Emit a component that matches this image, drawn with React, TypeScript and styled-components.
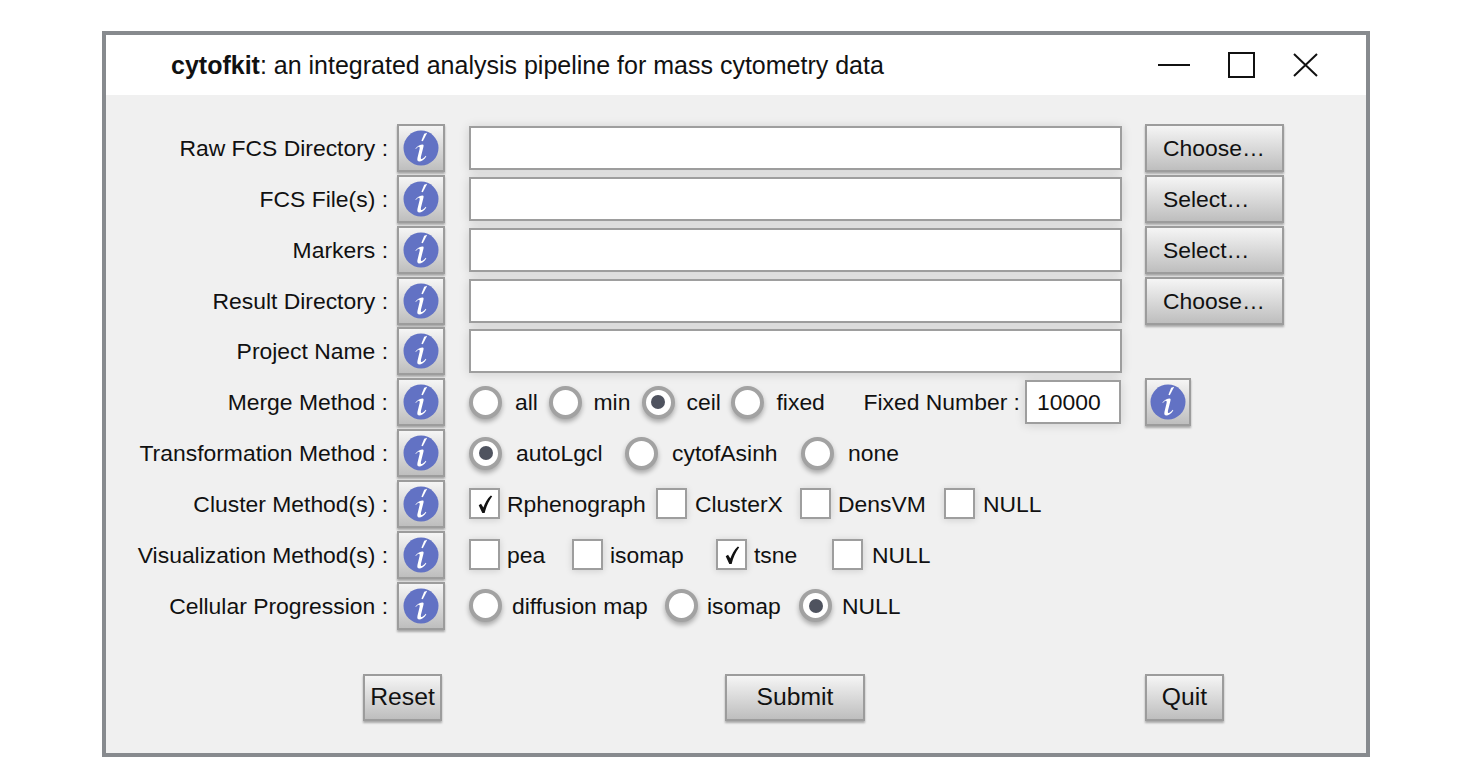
import React from "react";
import styled, { createGlobalStyle } from "styled-components";

const Global = createGlobalStyle`
  html, body {
    margin: 0;
    padding: 0;
    background: #fff;
  }
  body {
    font-family: "Liberation Sans", Arial, sans-serif;
    color: #111;
  }
`;

const Page = styled.div`
  width: 1472px;
  height: 766px;
  padding: 31px 102px 9px;
  box-sizing: border-box;
`;

const Window = styled.div`
  width: 1268px;
  height: 726px;
  box-sizing: border-box;
  border: 4px solid #878a8e;
  display: flex;
  flex-direction: column;
`;

const TitleBar = styled.div`
  height: 60px;
  flex: none;
  background: #fff;
  display: flex;
  align-items: center;
  padding-left: 65px;
`;

const Title = styled.div`
  font-size: 25px;
  padding-top: 1px;
  flex: 1;
  b {
    font-weight: 700;
  }
`;

const WinControls = styled.div`
  display: flex;
  align-items: center;
  gap: 38px;
  margin-right: 48px;
`;

const Body = styled.div`
  flex: 1;
  background: #f0f0f0;
  padding-top: 29px;
  display: flex;
  flex-direction: column;
`;

const Rows = styled.div`
  display: flex;
  flex-direction: column;
  gap: 2.85px;
`;

const Row = styled.div`
  display: flex;
  align-items: center;
  height: 48px;
`;

const Label = styled.div`
  width: 282px;
  flex: none;
  text-align: right;
  font-size: 22.9px;
  padding-top: 1px;
  white-space: nowrap;
`;

const raised = `
  box-sizing: border-box;
  border: 2.5px solid #9c9c9c;
  background: linear-gradient(#f5f5f5, #bebebe);
  box-shadow: 0 2px 2px rgba(0, 0, 0, 0.3);
`;

const InfoBox = styled.div<{ $left?: number; $width?: number }>`
  ${raised}
  width: ${(p) => p.$width ?? 48}px;
  height: 48px;
  flex: none;
  margin-left: ${(p) => p.$left ?? 9}px;
  display: flex;
  align-items: center;
  justify-content: center;
`;

const Controls = styled.div`
  margin-left: 24px;
  width: 653px;
  flex: none;
  display: flex;
  align-items: center;
  height: 100%;
`;

const TextField = styled.div<{ $width?: number; $left?: number }>`
  box-sizing: border-box;
  width: ${(p) => p.$width ?? 653}px;
  height: 44px;
  flex: none;
  margin-left: ${(p) => p.$left ?? 0}px;
  background: #fff;
  border: 2.5px solid #9e9e9e;
  box-shadow: 0 1px 10px rgba(0, 0, 0, 0.14);
  font-size: 22.9px;
  display: flex;
  align-items: center;
  padding: 1px 0 0 10px;
`;

const SideButton = styled.div`
  ${raised}
  margin-left: 23px;
  width: 139px;
  height: 48px;
  flex: none;
  font-size: 22.9px;
  display: flex;
  align-items: center;
  padding: 1px 0 0 16px;
`;

const Option = styled.div<{ $width?: number }>`
  display: flex;
  align-items: center;
  flex: none;
  width: ${(p) => (p.$width ? `${p.$width}px` : "auto")};
`;

const OptionText = styled.span<{ $gap: number }>`
  margin-left: ${(p) => p.$gap}px;
  padding-top: 1px;
  font-size: 22.9px;
  white-space: nowrap;
`;

const RadioMark = styled.span<{ $on?: boolean }>`
  width: 33px;
  height: 33px;
  flex: none;
  box-sizing: border-box;
  border-radius: 50%;
  border: 4px solid #a2a2a2;
  background: #fff;
  box-shadow: 0 3px 5px rgba(0, 0, 0, 0.3);
  display: flex;
  align-items: center;
  justify-content: center;
  &::after {
    content: "";
    display: ${(p) => (p.$on ? "block" : "none")};
    width: 14px;
    height: 14px;
    border-radius: 50%;
    background: #4f535f;
  }
`;

const CheckMark = styled.span`
  width: 31px;
  height: 31px;
  flex: none;
  box-sizing: border-box;
  border: 2.5px solid #9e9e9e;
  background: #fff;
  box-shadow: 0 1px 7px rgba(0, 0, 0, 0.14);
  display: flex;
  align-items: center;
  justify-content: center;
`;

const FixedLabel = styled.span`
  font-size: 22.9px;
  padding-top: 1px;
  white-space: nowrap;
`;

const Footer = styled.div`
  display: flex;
  align-items: center;
  margin-top: 44px;
  padding-left: 257px;
`;

const FootButton = styled.div<{ $width: number; $left?: number }>`
  ${raised}
  width: ${(p) => p.$width}px;
  height: 47px;
  margin-left: ${(p) => p.$left ?? 0}px;
  font-size: 24.7px;
  display: flex;
  align-items: center;
  justify-content: center;
`;

function InfoIcon() {
  return (
    <svg width="36" height="36" viewBox="0 0 36 36">
      <circle cx="18" cy="18" r="17.5" fill="#6272c4" />
      <path d="M21.2 3.8 L24.2 2.8 L19.8 11.2 L18.4 10.8 Z" fill="#fff" />
      <path
        d="M12.4 18.4 C14.6 15.8 17.4 14.4 19.6 14.4 C20.8 14.4 20.8 15.6 20.4 17 L18 26.4 C17.5 28.6 18.2 29.4 19.4 28.8 C20.6 28.2 21.6 27.2 22.8 25.8 L23.3 26.4 C21.2 29.6 18.4 31.4 16 31.4 C14.4 31.4 14 30 14.5 27.8 L16.6 19 C17 17.2 16.4 16.4 15.2 17 C14.4 17.4 13.6 18.1 12.9 18.9 Z"
        fill="#fff"
      />
    </svg>
  );
}

function Info({ left, width }: { left?: number; width?: number }) {
  return (
    <InfoBox $left={left} $width={width}>
      <InfoIcon />
    </InfoBox>
  );
}

function Radio({ text, gap, width, on }: { text: string; gap: number; width?: number; on?: boolean }) {
  return (
    <Option $width={width}>
      <RadioMark $on={on} />
      <OptionText $gap={gap}>{text}</OptionText>
    </Option>
  );
}

function Check({ text, gap, width, on }: { text: string; gap: number; width?: number; on?: boolean }) {
  return (
    <Option $width={width}>
      <CheckMark>
        {on && (
          <svg width="18" height="20" viewBox="0 0 20 22">
            <path d="M3 12.5 L5.6 10.6 L8.2 15 C10 10 12.5 5 16.5 1.5 L18 2.5 C14 8 11.4 14 9.6 21 L7 21 Z" fill="#111" />
          </svg>
        )}
      </CheckMark>
      <OptionText $gap={gap}>{text}</OptionText>
    </Option>
  );
}

export default function App() {
  return (
    <Page>
      <Global />
      <Window>
        <TitleBar>
          <Title>
            <b>cytofkit</b>: an integrated analysis pipeline for mass cytometry data
          </Title>
          <WinControls>
            <svg width="32" height="26" viewBox="0 0 32 26">
              <path d="M0 13 H32" stroke="#111" strokeWidth="2" />
            </svg>
            <svg width="27" height="26" viewBox="0 0 27 26">
              <rect x="1" y="1" width="25" height="24" fill="none" stroke="#111" strokeWidth="2" />
            </svg>
            <svg width="25" height="24" viewBox="0 0 25 24">
              <path d="M1 1 L24 23 M24 1 L1 23" stroke="#111" strokeWidth="2" />
            </svg>
          </WinControls>
        </TitleBar>
        <Body>
          <Rows>
            <Row>
              <Label>Raw FCS Directory :</Label>
              <Info />
              <Controls>
                <TextField />
              </Controls>
              <SideButton>Choose…</SideButton>
            </Row>
            <Row>
              <Label>FCS File(s) :</Label>
              <Info />
              <Controls>
                <TextField />
              </Controls>
              <SideButton>Select…</SideButton>
            </Row>
            <Row>
              <Label>Markers :</Label>
              <Info />
              <Controls>
                <TextField />
              </Controls>
              <SideButton>Select…</SideButton>
            </Row>
            <Row>
              <Label>Result Directory :</Label>
              <Info />
              <Controls>
                <TextField />
              </Controls>
              <SideButton>Choose…</SideButton>
            </Row>
            <Row>
              <Label>Project Name :</Label>
              <Info />
              <Controls>
                <TextField />
              </Controls>
            </Row>
            <Row>
              <Label>Merge Method :</Label>
              <Info />
              <Controls>
                <Radio text="all" gap={13} width={79.5} />
                <Radio text="min" gap={12} width={93} />
                <Radio text="ceil" gap={12} width={89} on />
                <Radio text="fixed" gap={13} width={133} />
                <FixedLabel>Fixed Number :</FixedLabel>
                <TextField $width={96.5} $left={5}>
                  10000
                </TextField>
              </Controls>
              <Info left={23} width={46} />
            </Row>
            <Row>
              <Label>Transformation Method :</Label>
              <Info />
              <Controls>
                <Radio text="autoLgcl" gap={14} width={156} on />
                <Radio text="cytofAsinh" gap={14} width={176} />
                <Radio text="none" gap={14} />
              </Controls>
            </Row>
            <Row>
              <Label>Cluster Method(s) :</Label>
              <Info />
              <Controls>
                <Check text="Rphenograph" gap={7} width={187} on />
                <Check text="ClusterX" gap={8} width={144} />
                <Check text="DensVM" gap={7} width={144} />
                <Check text="NULL" gap={8} />
              </Controls>
            </Row>
            <Row>
              <Label>Visualization Method(s) :</Label>
              <Info />
              <Controls>
                <Check text="pea" gap={7} width={103} />
                <Check text="isomap" gap={7} width={144} />
                <Check text="tsne" gap={7} width={116} on />
                <Check text="NULL" gap={9} />
              </Controls>
            </Row>
            <Row>
              <Label>Cellular Progression :</Label>
              <Info />
              <Controls>
                <Radio text="diffusion map" gap={10} width={196} />
                <Radio text="isomap" gap={9} width={134} />
                <Radio text="NULL" gap={10} on />
              </Controls>
            </Row>
          </Rows>
          <Footer>
            <FootButton $width={79}>Reset</FootButton>
            <FootButton $width={140} $left={283}>
              Submit
            </FootButton>
            <FootButton $width={79} $left={280}>
              Quit
            </FootButton>
          </Footer>
        </Body>
      </Window>
    </Page>
  );
}
